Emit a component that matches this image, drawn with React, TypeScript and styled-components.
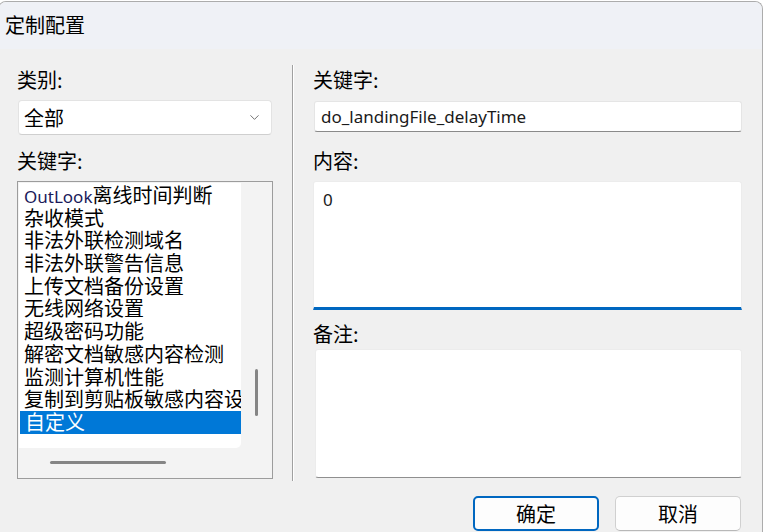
import React from 'react';
import styled, {createGlobalStyle} from "styled-components";
import {ChevronDown} from "lucide-react";

const GlobalStyle = createGlobalStyle`
  html, body {
    margin: 0;
    background: #ffffff;
    overflow: hidden;
  }
  body {
    font-family: "Noto Sans CJK SC", "Noto Sans", sans-serif;
    color: #000;
  }
`

const items = [
    'OutLook离线时间判断',
    '杂收模式',
    '非法外联检测域名',
    '非法外联警告信息',
    '上传文档备份设置',
    '无线网络设置',
    '超级密码功能',
    '解密文档敏感内容检测',
    '监测计算机性能',
    '复制到剪贴板敏感内容设置',
    '自定义',
];

const selected = '自定义';

// latin prefix is drawn in the narrower ui font, like the original list
const renderItem = (text: string) => {
    const m = text.match(/^([A-Za-z]+)(.*)$/);
    if (!m) return text;
    return <><Latin>{m[1]}</Latin>{m[2]}</>;
};

export default function App() {
    return (
        <>
            <GlobalStyle/>
            <Window>
                <TitleBar>定制配置</TitleBar>
                <Body>
                    <LeftCol>
                        <Label>类别:</Label>
                        <Combo>
                            <span>全部</span>
                            <ChevronDown size={15} strokeWidth={1.4} color="#5f5f5f"/>
                        </Combo>
                        <Label $mt={13}>关键字:</Label>
                        <ListBox>
                            <ListItems>
                                {items.map(item => (
                                    <ListRow key={item} $active={item === selected}>{renderItem(item)}</ListRow>
                                ))}
                            </ListItems>
                            <VTrack>
                                <VThumb $top={186} $height={47}/>
                            </VTrack>
                            <HTrack>
                                <HThumb $left={31} $width={116}/>
                            </HTrack>
                        </ListBox>
                    </LeftCol>
                    <Separator/>
                    <RightCol>
                        <Label>关键字:</Label>
                        <TextInput>do_landingFile_delayTime</TextInput>
                        <Label $mt={16}>内容:</Label>
                        <ContentArea>0</ContentArea>
                        <Label $mt={11}>备注:</Label>
                        <NotesArea/>
                        <ButtonRow>
                            <Button $primary>确定</Button>
                            <Button>取消</Button>
                        </ButtonRow>
                    </RightCol>
                </Body>
            </Window>
        </>
    );
}

const Window = styled.div`
  margin: 1px 0 0 -2px;
  width: 765px;
  height: 531px;
  box-sizing: border-box;
  border: 1px solid #acacac;
  border-bottom: none;
  border-radius: 8px 8px 0 0;
  background: #f0f0f0;
  overflow: hidden;
  display: flex;
  flex-direction: column;
`

const TitleBar = styled.div`
  height: 47px;
  flex: none;
  display: flex;
  align-items: center;
  padding: 0 0 2px 6px;
  box-sizing: border-box;
  background: #eff1f6;
  font-size: 20px;
  color: #000;
`

const Body = styled.div`
  display: flex;
  align-items: flex-start;
  padding: 18px 20px 0 18px;
`

const LeftCol = styled.div`
  width: 256px;
  display: flex;
  flex-direction: column;
`

const RightCol = styled.div`
  width: 429px;
  display: flex;
  flex-direction: column;
`

const Separator = styled.div`
  width: 1px;
  height: 416px;
  margin: -2px 19px 0 19px;
  background: #a0a0a0;
  border-right: 1px solid #ffffff;
`

const Label = styled.div<{ $mt?: number }>`
  height: 26px;
  line-height: 26px;
  margin-top: ${p => p.$mt ?? 0}px;
  font-size: 20px;
  color: #000;
`

const Combo = styled.div`
  margin: 7px 0 0 1px;
  width: 254px;
  height: 35px;
  box-sizing: border-box;
  display: flex;
  align-items: center;
  justify-content: space-between;
  padding: 0 9px 0 5px;
  background: #ffffff;
  border: 1px solid #e3e3e3;
  border-bottom-color: #cfcfcf;
  border-radius: 4px;
  font-size: 20px;
`

const ListBox = styled.div`
  margin-top: 7px;
  width: 256px;
  height: 298px;
  box-sizing: border-box;
  border: 1px solid #9c9c9c;
  padding: 1px;
  background: #f3f3f3;
  display: grid;
  grid-template-columns: 222px 1fr;
  grid-template-rows: 265px 1fr;
`

const ListItems = styled.div`
  background: #ffffff;
  border-bottom-right-radius: 5px;
  padding-top: 1px;
  overflow: hidden;
`

const ListRow = styled.div<{ $active?: boolean }>`
  height: 22.7px;
  line-height: 22.7px;
  padding-left: 5px;
  margin-left: ${p => p.$active ? 1 : 0}px;
  font-size: 20px;
  white-space: nowrap;
  background: ${p => p.$active ? '#0078d7' : 'transparent'};
  color: ${p => p.$active ? '#ffffff' : '#000000'};
`

const Latin = styled.span`
  font-family: "Noto Sans", sans-serif;
  font-size: 17px;
  color: #1a1a5a;
`

const VTrack = styled.div`
  display: flex;
  justify-content: center;
`

const VThumb = styled.div<{ $top: number, $height: number }>`
  width: 3px;
  margin-top: ${p => p.$top}px;
  height: ${p => p.$height}px;
  border-radius: 2px;
  background: #858585;
`

const HTrack = styled.div`
  display: flex;
  align-items: center;
  grid-column: 1 / 2;
`

const HThumb = styled.div<{ $left: number, $width: number }>`
  height: 3px;
  margin-left: ${p => p.$left}px;
  width: ${p => p.$width}px;
  border-radius: 2px;
  background: #858585;
`

const TextInput = styled.div`
  margin: 8px 0 0 1px;
  width: 428px;
  height: 31px;
  box-sizing: border-box;
  display: flex;
  align-items: center;
  padding-left: 6px;
  background: #ffffff;
  border: 1px solid #e5e5e5;
  border-bottom-color: #8a8a8a;
  border-radius: 3px;
  font-family: "Noto Sans", sans-serif;
  font-size: 17px;
  color: #1a1a1a;
`

const ContentArea = styled.div`
  margin-top: 7px;
  width: 429px;
  height: 129px;
  box-sizing: border-box;
  padding: 6px 0 0 9px;
  background: #ffffff;
  border: 1px solid #ececec;
  border-bottom: 3px solid #0067c0;
  border-radius: 3px 3px 0 0;
  font-family: "Noto Sans", sans-serif;
  font-size: 17px;
  color: #1a1a1a;
`

const NotesArea = styled.div`
  margin: 2px 0 0 2px;
  width: 427px;
  height: 129px;
  box-sizing: border-box;
  background: #ffffff;
  border: 1px solid #ececec;
  border-bottom-color: #8f8f8f;
  border-radius: 3px;
`

const ButtonRow = styled.div`
  display: flex;
  justify-content: flex-end;
  gap: 16px;
  margin-top: 18px;
  padding-right: 1px;
`

const Button = styled.div<{ $primary?: boolean }>`
  width: 126px;
  height: 35px;
  box-sizing: border-box;
  display: flex;
  align-items: center;
  justify-content: center;
  background: #fdfdfd;
  border: ${p => p.$primary ? '2px solid #0067c0' : '1px solid #d0d0d0'};
  border-bottom-color: ${p => p.$primary ? '#0067c0' : '#b8b8b8'};
  border-radius: 5px;
  font-size: 20px;
  color: #000;
`
